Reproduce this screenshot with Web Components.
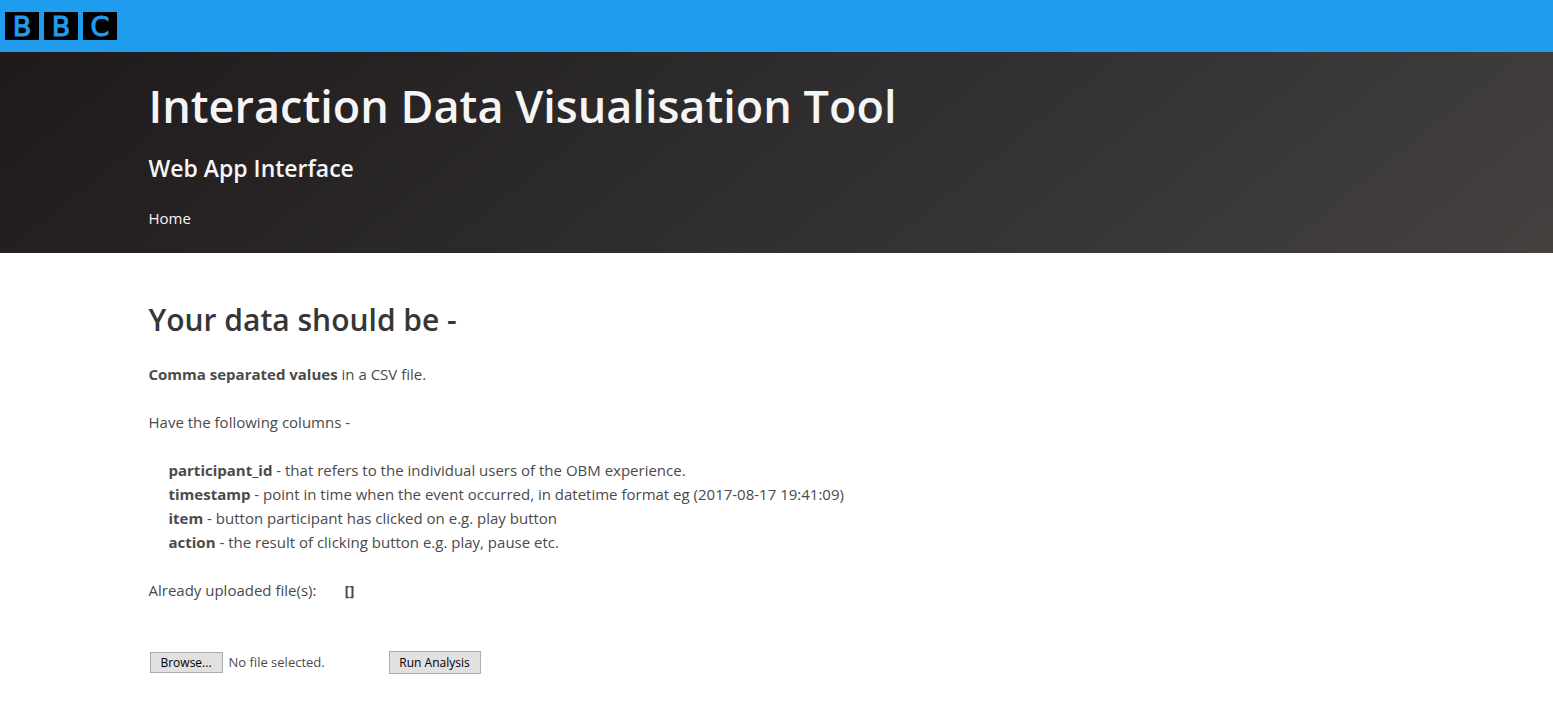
<!DOCTYPE html>
<html lang="en">
<head>
<meta charset="utf-8">
<title>Interaction Data Visualisation Tool</title>
<style>
body { margin: 0; background: #fff; color: #4a4a4a; font: 15px/24px "Open Sans", "Noto Sans", sans-serif; }
</style>
</head>
<body>
<app-page></app-page>
<script>
const define = (name, html, setup) => customElements.define(name, class extends HTMLElement {
  constructor() {
    super();
    this.attachShadow({ mode: "open" }).innerHTML = html;
    if (setup) setup(this.shadowRoot);
  }
});

define("brand-bar", `
<style>
:host { display: flex; align-items: center; height: 52px; background: #209cee; }
a { display: flex; gap: 5px; margin-left: 5px; text-decoration: none; }
span { width: 34px; height: 28px; background: #000; color: #209cee; text-align: center;
  font: 27px/30px "DejaVu Sans", sans-serif; -webkit-text-stroke: 1px #209cee; }
</style>
<a href="#" aria-label="BBC"><span>B</span><span>B</span><span>C</span></a>`);

define("page-container", `
<style>
:host { display: block; max-width: 1256px; margin: 0 auto; }
</style>
<slot></slot>`);

define("page-hero", `
<style>
:host { display: block; padding: 27px 0 23px; color: #f5f5f5;
  background: linear-gradient(141deg, #1f191a 0%, #363636 71%, #46403f 100%); }
h1 { margin: 0 0 20px; font-size: 45px; line-height: 54px; font-weight: 600; }
h2 { margin: 0 0 23px; font-size: 23px; line-height: 30px; font-weight: 600; }
a { color: inherit; text-decoration: none; }
nav { height: 24px; }
</style>
<page-container>
  <h1>Interaction Data Visualisation Tool</h1>
  <h2>Web App Interface</h2>
  <nav><a href="#">Home</a></nav>
</page-container>`);

define("data-columns", `
<style>
:host { display: block; }
ul { list-style: none; margin: 0; padding: 0 0 0 20px; }
</style>
<ul>
  <li><b>participant_id</b> - that refers to the individual users of the OBM experience.</li>
  <li><b>timestamp</b> - point in time when the event occurred, in datetime format eg (2017-08-17 19:41:09)</li>
  <li><b>item</b> - button participant has clicked on e.g. play button</li>
  <li><b>action</b> - the result of clicking button e.g. play, pause etc.</li>
</ul>`);

define("upload-form", `
<style>
:host { display: block; font-size: 13px; }
form { display: flex; align-items: center; margin: 0; }
.file { display: flex; align-items: center; gap: 6px; width: 240px; }
button { box-sizing: border-box; margin: 0; padding: 2px 0 0; border: 1px solid #adadad; border-radius: 0;
  background: #e1e1e1; color: #000; font: 12px/16px "Open Sans", "Noto Sans", sans-serif; }
#browse { width: 73px; height: 21px; margin-left: 1px; }
#run { width: 92px; height: 23px; }
</style>
<form>
  <div class="file">
    <button type="button" id="browse">Browse...</button>
    <label for="file">No file selected.</label>
    <input type="file" id="file" accept=".csv" hidden>
  </div>
  <button type="submit" id="run">Run Analysis</button>
</form>`, root => {
  const file = root.querySelector("#file");
  root.querySelector("#browse").addEventListener("click", () => file.click());
  file.addEventListener("change", () => {
    root.querySelector("label").textContent = file.files.length ? file.files[0].name : "No file selected.";
  });
  root.querySelector("form").addEventListener("submit", e => e.preventDefault());
});

define("app-page", `
<style>
:host { display: block; }
main { display: flex; flex-direction: column; gap: 24px; padding: 49px 0; }
h2 { margin: 0; color: #363636; font-size: 30px; line-height: 36px; font-weight: 600; }
p { margin: 0; }
.uploaded { display: flex; gap: 28px; }
upload-form { margin-top: 24px; }
</style>
<brand-bar></brand-bar>
<page-hero></page-hero>
<page-container>
  <main>
    <h2>Your data should be -</h2>
    <p><b>Comma separated values</b> in a CSV file.</p>
    <p>Have the following columns -</p>
    <data-columns></data-columns>
    <p class="uploaded"><span>Already uploaded file(s):</span><b>[]</b></p>
    <upload-form></upload-form>
  </main>
</page-container>`);
</script>
</body>
</html>
